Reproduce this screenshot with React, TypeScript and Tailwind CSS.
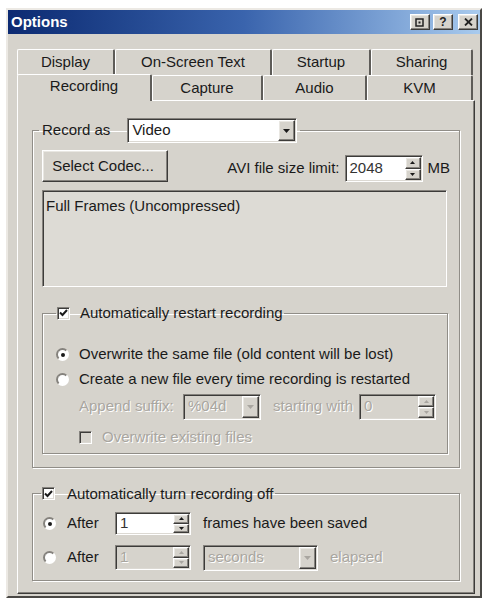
import clsx from 'clsx'
import type { ReactNode } from 'react'

const sunken =
  'border border-t-[#85827d] border-l-[#85827d] border-b-white border-r-white shadow-[inset_1px_1px_0_#3c3b39,inset_-1px_-1px_0_#dcd9d3]'
const raised =
  'border border-t-white border-l-white border-b-[#3c3b39] border-r-[#3c3b39] shadow-[inset_-1px_-1px_0_#85827d,inset_1px_1px_0_#e9e7e2]'
const dim = 'text-[#a9a6a0] [text-shadow:1px_1px_0_#fff]'
const etched = 'border border-[#908d87] shadow-[1px_1px_0_#fff,inset_1px_1px_0_#fff]'

function Arrow({ up, disabled, size = 7 }: { up?: boolean; disabled?: boolean; size?: number }) {
  const h = Math.ceil(size / 2)
  return (
    <svg width={size} height={h} viewBox={`0 0 ${size} ${h}`}>
      <polygon
        points={up ? `0,${h} ${size / 2},0 ${size},${h}` : `0,0 ${size},0 ${size / 2},${h}`}
        fill={disabled ? '#a9a6a0' : '#1a1a1a'}
      />
    </svg>
  )
}

function Combo({ value, disabled, className }: { value: string; disabled?: boolean; className?: string }) {
  return (
    <div className={clsx(sunken, 'flex items-stretch p-[1px]', disabled ? 'bg-[#d6d3cc]' : 'bg-white', className)}>
      <span className={clsx('flex flex-1 items-center truncate px-[3px]', disabled && dim)}>{value}</span>
      <div className={clsx(raised, 'flex w-[17px] items-center justify-center bg-[#d6d3cc]')}>
        <Arrow disabled={disabled} />
      </div>
    </div>
  )
}

function Spin({ value, disabled, className }: { value: string; disabled?: boolean; className?: string }) {
  return (
    <div className={clsx(sunken, 'flex items-stretch p-[1px]', disabled ? 'bg-[#d6d3cc]' : 'bg-white', className)}>
      <span className={clsx('flex flex-1 items-center px-[3px]', disabled ? dim : 'text-[#333]')}>{value}</span>
      <div className="flex w-[16px] flex-col">
        <div className={clsx(raised, 'flex flex-1 items-center justify-center bg-[#d6d3cc]')}>
          <Arrow up disabled={disabled} size={5} />
        </div>
        <div className={clsx(raised, 'flex flex-1 items-center justify-center bg-[#d6d3cc]')}>
          <Arrow disabled={disabled} size={5} />
        </div>
      </div>
    </div>
  )
}

function Check({ checked, disabled }: { checked?: boolean; disabled?: boolean }) {
  return (
    <span
      className={clsx(
        sunken,
        'flex h-[13px] w-[13px] shrink-0 items-center justify-center',
        disabled ? 'bg-[#d6d3cc]' : 'bg-white',
      )}
    >
      {checked && (
        <svg width="9" height="8" viewBox="0 0 9 8">
          <path d="M1 3.5 L3.5 6 L8 1" stroke="#1a1a1a" strokeWidth="2" fill="none" />
        </svg>
      )}
    </span>
  )
}

function Radio({ checked }: { checked?: boolean }) {
  return (
    <span className="flex h-[13px] w-[13px] shrink-0 items-center justify-center rounded-full border-2 border-t-[#85827d] border-l-[#85827d] border-b-white border-r-white bg-white">
      {checked && <span className="h-[4px] w-[4px] rounded-full bg-[#1a1a1a]" />}
    </span>
  )
}

function TitleButton({ children }: { children: ReactNode }) {
  return (
    <div className={clsx(raised, 'flex h-[16px] w-[20px] items-center justify-center bg-[#d6d3cc] text-[12px] font-bold leading-none text-[#222]')}>
      {children}
    </div>
  )
}

function TitleBar() {
  return (
    <div className="flex h-[24px] items-center justify-between bg-linear-to-r from-[#0c2a72] via-[#3a64ad] to-[#a9cbee] pl-[3px] pr-[2px]">
      <span className="text-[15px] font-bold text-white">Options</span>
      <div className="flex items-center">
        <TitleButton>
          <svg width="10" height="9" viewBox="0 0 10 9">
            <rect x="1" y="1" width="7" height="7" fill="none" stroke="#222" strokeWidth="1.5" />
            <rect x="3.5" y="3.5" width="2" height="2" fill="#222" />
          </svg>
        </TitleButton>
        <div className="w-[3px]" />
        <TitleButton>?</TitleButton>
        <div className="w-[5px]" />
        <TitleButton>
          <svg width="9" height="8" viewBox="0 0 9 8">
            <path d="M1 0.5 L8 7.5 M8 0.5 L1 7.5" stroke="#222" strokeWidth="1.8" />
          </svg>
        </TitleButton>
      </div>
    </div>
  )
}

const backTabs: [string, number][] = [
  ['Display', 98],
  ['On-Screen Text', 157],
  ['Startup', 99],
  ['Sharing', 102],
]
const frontTabs: [string, number][] = [
  ['Recording', 135],
  ['Capture', 111],
  ['Audio', 104],
  ['KVM', 106],
]

const tabCls =
  'flex shrink-0 items-center justify-center rounded-t-[2px] border-t border-l border-t-white border-l-white border-r-2 border-r-[#5e5c58] bg-[#d6d3cc]'

function Tabs() {
  return (
    <div className="flex flex-col">
      <div className="flex h-[26px]">
        {backTabs.map(([label, w]) => (
          <div key={label} className={tabCls} style={{ width: w }}>
            {label}
          </div>
        ))}
      </div>
      <div className="flex h-[25px] items-end">
        {frontTabs.map(([label, w], i) => (
          <div
            key={label}
            className={clsx(tabCls, i === 0 ? 'relative z-10 -mb-[1px] h-[27px] pb-[3px]' : 'h-[25px]')}
            style={{ width: w }}
          >
            {label}
          </div>
        ))}
      </div>
    </div>
  )
}

function Panel() {
  return (
    <div className="flex flex-1 flex-col border border-t-white border-l-white border-b-[#3c3b39] border-r-[#3c3b39] px-[14px] pt-[17px] shadow-[inset_-1px_-1px_0_#85827d]">
      {/* Record as group */}
      <fieldset className={clsx(etched, 'px-[9px] pb-[13px]')}>
        <legend className="-ml-[3px] flex items-center gap-[17px] px-[3px]">
          <span>Record as</span>
          <Combo value="Video" className="h-[25px] w-[170px]" />
        </legend>

        <div className="mt-[7px] flex items-end justify-between">
          <button className={clsx(raised, 'h-[32px] w-[126px] bg-[#d6d3cc] pr-[4px]')}>Select Codec...</button>
          <div className="flex items-center gap-[5px]">
            <span>AVI file size limit:</span>
            <Spin value="2048" className="h-[27px] w-[78px]" />
            <span>MB</span>
          </div>
        </div>

        <div className={clsx(sunken, 'mt-[8px] mr-[3px] h-[97px] bg-[#dddbd5] px-[3px] pt-[6px] leading-[18px]')}>
          Full Frames (Uncompressed)
        </div>

        {/* Restart group */}
        <fieldset className={clsx(etched, 'mt-[15px] mr-[2px] pl-[13px] pb-[4px]')}>
          <legend className="flex items-center gap-[10px] px-[1px]">
            <Check checked />
            <span>Automatically restart recording</span>
          </legend>

          <div className="mt-[18px] flex h-[24px] items-center gap-[10px]">
            <Radio checked />
            <span>Overwrite the same file (old content will be lost)</span>
          </div>
          <div className="flex h-[25px] items-center gap-[10px]">
            <Radio />
            <span>Create a new file every time recording is restarted</span>
          </div>
          <div className="mt-[2px] flex h-[26px] items-center pl-[23px]">
            <span className={clsx(dim, 'w-[104px]')}>Append suffix:</span>
            <Combo value="%04d" disabled className="h-[26px] w-[78px]" />
            <span className={clsx(dim, 'ml-[12px] w-[86px]')}>starting with</span>
            <Spin value="0" disabled className="h-[26px] w-[77px]" />
          </div>
          <div className="mt-[7px] flex h-[22px] items-center gap-[10px] pl-[23px]">
            <Check disabled />
            <span className={dim}>Overwrite existing files</span>
          </div>
        </fieldset>
      </fieldset>

      {/* Turn off group */}
      <fieldset className={clsx(etched, 'mt-[15px] pl-[10px] pb-[10px]')}>
        <legend className="-ml-[2px] flex items-center gap-[12px] px-[1px]">
          <Check checked />
          <span>Automatically turn recording off</span>
        </legend>

        <div className="mt-[7px] flex h-[23px] items-center">
          <Radio checked />
          <span className="ml-[11px] w-[48px]">After</span>
          <Spin value="1" className="h-[23px] w-[76px]" />
          <span className="ml-[12px]">frames have been saved</span>
        </div>
        <div className="mt-[10px] flex h-[25px] items-center">
          <Radio />
          <span className="ml-[11px] w-[48px]">After</span>
          <Spin value="1" disabled className="h-[25px] w-[76px]" />
          <Combo value="seconds" disabled className="ml-[12px] h-[26px] w-[115px]" />
          <span className={clsx(dim, 'ml-[12px]')}>elapsed</span>
        </div>
      </fieldset>
    </div>
  )
}

export default function App() {
  return (
    <div className="h-[601px] w-[487px] overflow-hidden bg-white pt-[8px] pl-[6px] font-['Liberation_Sans',Arial,sans-serif] text-[15px] text-[#1a1a1a]">
      <div className="flex h-[590px] w-[476px] flex-col border-2 border-t-[#ece9e4] border-l-[#ece9e4] border-b-[#4a4845] border-r-[#4a4845] bg-[#d6d3cc]">
        <TitleBar />
        <div className="flex flex-1 flex-col pt-[15px] pr-[5px] pb-[2px] pl-[9px]">
          <Tabs />
          <Panel />
        </div>
      </div>
    </div>
  )
}
